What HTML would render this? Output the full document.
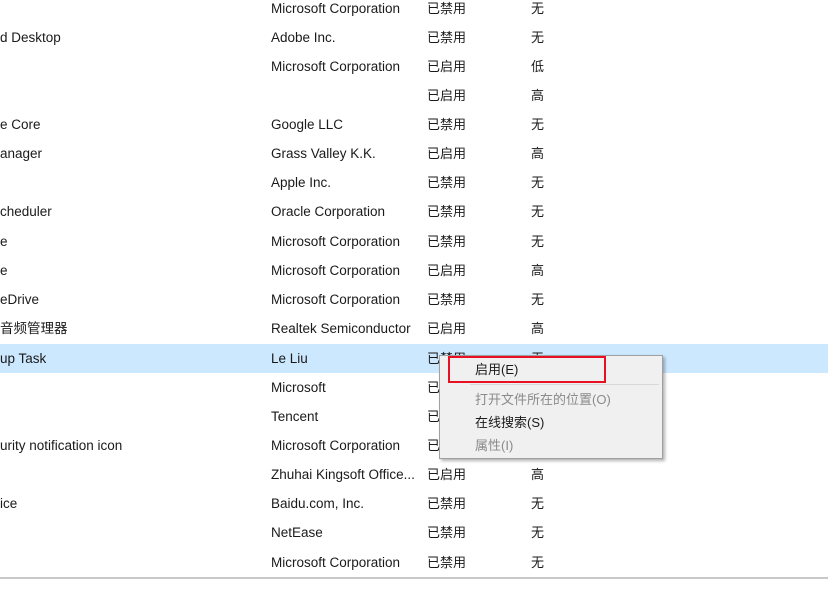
<!DOCTYPE html>
<html><head><meta charset="utf-8"><style>
body{margin:0;width:828px;height:613px;background:#fff;overflow:hidden;position:relative;font-family:"Liberation Sans","Noto Sans CJK SC",sans-serif;font-size:13px;color:#1a1a1a}
.r{position:absolute;left:0;width:828px;height:29px;line-height:30px}
.r span{position:absolute;white-space:nowrap}
.a,.b{font-size:13.5px}
.a{left:0}.b{left:271px}.c{left:427px}.d{left:531px}
.hl{background:#cce8ff}
.line{position:absolute;left:0;top:577px;width:828px;height:2px;background:#c8c8c8}
.menu{position:absolute;left:439px;top:355px;width:224px;height:104px;background:#f0f0f0;border:1px solid #a0a0a0;box-shadow:2px 2px 3px rgba(0,0,0,.3);box-sizing:border-box}
.mi{position:absolute;left:35px;line-height:18px;white-space:nowrap}
.sep{position:absolute;left:30px;right:3px;top:28px;height:1px;background:#d8d8d8}
.red{position:absolute;left:448px;top:356px;width:158px;height:27px;border:2px solid #e81123;box-sizing:border-box}
.g{color:#8a8a8a}
</style></head><body>
<div class="r" style="top:-6px"><span class="a"></span><span class="b">Microsoft Corporation</span><span class="c">已禁用</span><span class="d">无</span></div>
<div class="r" style="top:23px"><span class="a">d Desktop</span><span class="b">Adobe Inc.</span><span class="c">已禁用</span><span class="d">无</span></div>
<div class="r" style="top:52px"><span class="b">Microsoft Corporation</span><span class="c">已启用</span><span class="d">低</span></div>
<div class="r" style="top:81px"><span class="c">已启用</span><span class="d">高</span></div>
<div class="r" style="top:110px"><span class="a">e Core</span><span class="b">Google LLC</span><span class="c">已禁用</span><span class="d">无</span></div>
<div class="r" style="top:139px"><span class="a">anager</span><span class="b">Grass Valley K.K.</span><span class="c">已启用</span><span class="d">高</span></div>
<div class="r" style="top:168px"><span class="b">Apple Inc.</span><span class="c">已禁用</span><span class="d">无</span></div>
<div class="r" style="top:197px"><span class="a">cheduler</span><span class="b">Oracle Corporation</span><span class="c">已禁用</span><span class="d">无</span></div>
<div class="r" style="top:227px"><span class="a">e</span><span class="b">Microsoft Corporation</span><span class="c">已禁用</span><span class="d">无</span></div>
<div class="r" style="top:256px"><span class="a">e</span><span class="b">Microsoft Corporation</span><span class="c">已启用</span><span class="d">高</span></div>
<div class="r" style="top:285px"><span class="a">eDrive</span><span class="b">Microsoft Corporation</span><span class="c">已禁用</span><span class="d">无</span></div>
<div class="r" style="top:314px"><span class="a">音频管理器</span><span class="b">Realtek Semiconductor</span><span class="c">已启用</span><span class="d">高</span></div>
<div class="r hl" style="top:344px"><span class="a">up Task</span><span class="b">Le Liu</span><span class="c">已禁用</span><span class="d">无</span></div>
<div class="r" style="top:373px"><span class="b">Microsoft</span><span class="c">已</span></div>
<div class="r" style="top:402px"><span class="b">Tencent</span><span class="c">已</span></div>
<div class="r" style="top:431px"><span class="a">urity notification icon</span><span class="b">Microsoft Corporation</span><span class="c">已</span></div>
<div class="r" style="top:460px"><span class="b">Zhuhai Kingsoft Office...</span><span class="c">已启用</span><span class="d">高</span></div>
<div class="r" style="top:489px"><span class="a">ice</span><span class="b">Baidu.com, Inc.</span><span class="c">已禁用</span><span class="d">无</span></div>
<div class="r" style="top:518px"><span class="b">NetEase</span><span class="c">已禁用</span><span class="d">无</span></div>
<div class="r" style="top:548px"><span class="b">Microsoft Corporation</span><span class="c">已禁用</span><span class="d">无</span></div>
<div class="line"></div>
<div class="menu">
<div class="mi" style="top:5px">启用(E)</div>
<div class="sep"></div>
<div class="mi g" style="top:35px">打开文件所在的位置(O)</div>
<div class="mi" style="top:58px">在线搜索(S)</div>
<div class="mi g" style="top:81px">属性(I)</div>
</div>
<div class="red"></div>
</body></html>
